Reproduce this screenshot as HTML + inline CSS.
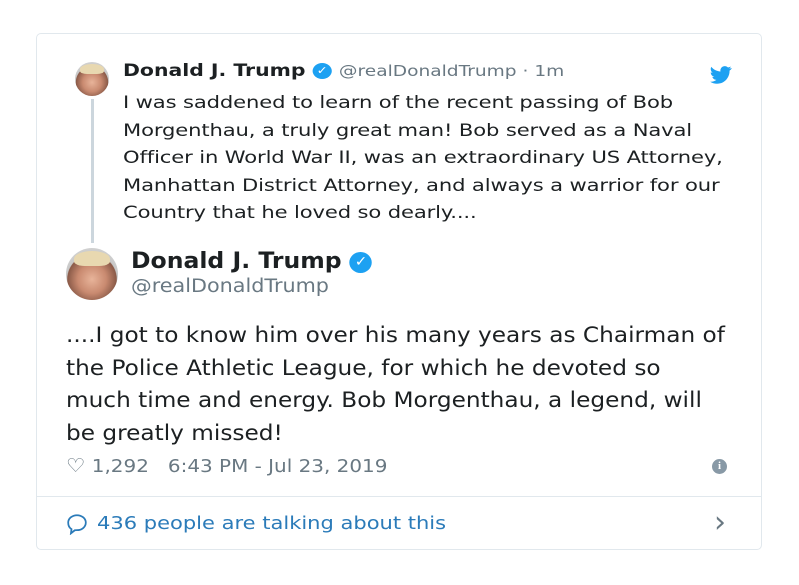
<!DOCTYPE html>
<html><head><meta charset="utf-8"><style>
body{margin:0;width:799px;height:585px;background:#fff;font-family:"DejaVu Sans","Liberation Sans",sans-serif;color:#1c2022;position:relative;overflow:hidden}
.card{position:absolute;left:36px;top:33px;width:726px;height:517px;border:1px solid #e1e8ed;border-radius:5px;box-sizing:border-box}
.a{position:absolute;white-space:nowrap;transform-origin:0 50%}
.av{position:absolute;border-radius:50%;background:radial-gradient(circle at 50% 60%,#e8b49a 0,#c98a70 35%,#8a5a48 60%,#c8c8c8 62%,#e0e0e0 100%)}
.av:before{content:"";position:absolute;left:15%;top:5%;width:70%;height:30%;border-radius:50% 50% 30% 30%;background:#e8d8b0}
.chk{display:inline-block;background:#1da1f2;border-radius:50%;color:#fff;text-align:center;font-weight:bold;vertical-align:middle}
</style></head><body>
<div class="card"></div>
<div class="av" style="left:75px;top:62px;width:34px;height:34px"></div>
<div style="position:absolute;left:91px;top:99px;width:3px;height:144px;background:#ccd6dd"></div>
<div class="a" style="left:123px;top:61px;font-size:17px;font-weight:bold;transform:scaleX(1.2)">Donald J. Trump <span class="chk" style="width:16px;height:16px;font-size:11px;line-height:16px">✓</span> <span style="font-weight:normal;color:#697882;font-size:15.5px">@realDonaldTrump · 1m</span></div>
<svg style="position:absolute;left:710px;top:66px" width="22" height="18" viewBox="0 0 24 20"><path fill="#1da1f2" d="M23.6 2.4c-.9.4-1.8.6-2.8.8 1-.6 1.8-1.6 2.1-2.7-.9.6-2 1-3.1 1.2C18.9.7 17.6.1 16.2.1c-2.7 0-4.9 2.2-4.9 4.9 0 .4 0 .8.1 1.1C7.3 5.9 3.7 4 1.3 1 .8 1.7.6 2.6.6 3.5c0 1.7.9 3.2 2.2 4.1-.8 0-1.6-.2-2.2-.6v.1c0 2.4 1.7 4.4 3.9 4.8-.4.1-.8.2-1.3.2-.3 0-.6 0-.9-.1.6 2 2.4 3.4 4.6 3.4-1.7 1.3-3.8 2.1-6.1 2.1H0c2.2 1.4 4.8 2.2 7.5 2.2 9.1 0 14-7.5 14-14v-.6c1-.7 1.8-1.6 2.5-2.5z"/></svg>
<div class="a" style="left:123px;top:90px;font-size:17px;line-height:27.5px;letter-spacing:-0.1px;transform:scaleX(1.24)">I was saddened to learn of the recent passing of Bob<br>Morgenthau, a truly great man! Bob served as a Naval<br>Officer in World War II, was an extraordinary US Attorney,<br>Manhattan District Attorney, and always a warrior for our<br>Country that he loved so dearly....</div>
<div class="av" style="left:66px;top:248px;width:52px;height:52px"></div>
<div class="a" style="left:131px;top:249px;font-size:22px;font-weight:bold;transform:scaleX(1.07)">Donald J. Trump <span class="chk" style="width:21px;height:21px;font-size:14px;line-height:21px">✓</span></div>
<div class="a" style="left:131px;top:276px;font-size:18.5px;color:#697882;transform:scaleX(1.12)">@realDonaldTrump</div>
<div class="a" style="left:66px;top:319px;font-size:21px;line-height:32.5px;transform:scaleX(1.105)">....I got to know him over his many years as Chairman of<br>the Police Athletic League, for which he devoted so<br>much time and energy. Bob Morgenthau, a legend, will<br>be greatly missed!</div>
<div class="a" style="left:66px;top:455px;font-size:17.5px;color:#697882;transform:scaleX(1.14)"><span style="font-size:19px">♡</span> 1,292 &nbsp; 6:43 PM - Jul 23, 2019</div>
<div style="position:absolute;left:712px;top:459px;width:15px;height:15px;border-radius:50%;background:#8899a6;color:#fff;font-size:11px;line-height:15px;text-align:center;font-weight:bold;font-family:'Liberation Serif',serif">i</div>
<div style="position:absolute;left:37px;top:496px;width:724px;height:1px;background:#e1e8ed"></div>
<svg width="22" height="22" viewBox="0 0 20 20" style="position:absolute;left:66px;top:513px"><path d="M10 2c4.4 0 8 2.9 8 6.8S14.4 15.6 10 15.6c-.8 0-1.3 0-2 .1L4.5 18.5l.5-3.8C3 13.5 2 11.3 2 8.8 2 4.9 5.6 2 10 2z" fill="none" stroke="#2b7bb9" stroke-width="1.6"/></svg>
<div class="a" style="left:97px;top:514px;font-size:17.5px;color:#2b7bb9;transform:scaleX(1.2)">436 people are talking about this</div>
<div class="a" style="left:714px;top:505px;font-size:30px;color:#697882">›</div>
</body></html>
